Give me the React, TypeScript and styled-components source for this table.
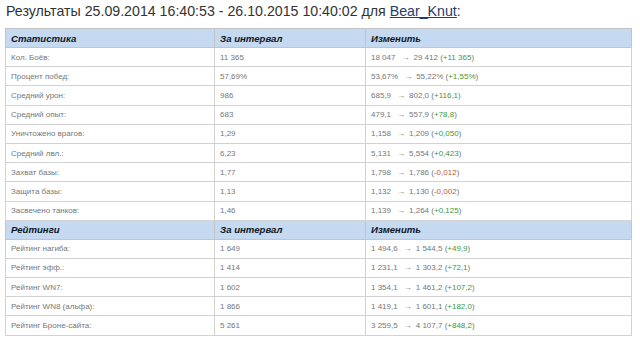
import React from 'react';
import styled, { createGlobalStyle } from 'styled-components';

////////////////////// styled [START]
const GlobalStyle = createGlobalStyle`
  html, body {
    margin: 0;
    padding: 0;
    background: #fff;
  }
`;

const Page = styled.div`
  padding: 2px 5px 0 5px;
  width: 626px;
  font-family: 'Liberation Sans', Arial, sans-serif;
`;

const Title = styled.h2`
  margin: 0 0 8px 1px;
  height: 18px;
  font-size: 14.2px;
  font-weight: normal;
  line-height: 18px;
  color: #333;
  white-space: nowrap;
`;

const UserLink = styled.a`
  color: #1e3c6e;
  text-decoration: underline;
`;

const Table = styled.table`
  width: 626px;
  border-collapse: collapse;
  table-layout: fixed;
  border: 1px solid #c4c4c4;
`;

const HeadCell = styled.th`
  height: 18px;
  padding: 0 5px;
  background: #c5daf0;
  border: 1px solid #c4c4c4;
  text-align: left;
  font-size: 9.6px;
  font-weight: bold;
  font-style: italic;
  color: #0e1626;
`;

const Cell = styled.td`
  height: 18.2px;
  padding: 0 5px;
  border: 1px solid #d2d2d2;
  font-size: 8px;
  color: #777;
  white-space: nowrap;
`;

type DeltaProps = { $negative: boolean };
const Delta = styled.span<DeltaProps>`
  color: ${({ $negative }) => ($negative ? '#c8582e' : '#3c9a3c')};
`;

const Arrow = styled.span`
  margin: 0 4px 0 6px;
  font-size: 8px;
  color: #777;
`;
////////////////////// styled [END]

type Row = [string, string, string, string, string];

const stats: Row[] = [
  ['Кол. Боёв:', '11 365', '18 047', '29 412', '+11 365'],
  ['Процент побед:', '57,69%', '53,67%', '55,22%', '+1,55%'],
  ['Средний урон:', '986', '685,9', '802,0', '+116,1'],
  ['Средний опыт:', '683', '479,1', '557,9', '+78,8'],
  ['Уничтожено врагов:', '1,29', '1,158', '1,209', '+0,050'],
  ['Средний лвл.:', '6,23', '5,131', '5,554', '+0,423'],
  ['Захват базы:', '1,77', '1,798', '1,786', '-0,012'],
  ['Защита базы:', '1,13', '1,132', '1,130', '-0,002'],
  ['Засвечено танков:', '1,46', '1,139', '1,264', '+0,125'],
];

const ratings: Row[] = [
  ['Рейтинг нагиба:', '1 649', '1 494,6', '1 544,5', '+49,9'],
  ['Рейтинг эфф.:', '1 414', '1 231,1', '1 303,2', '+72,1'],
  ['Рейтинг WN7:', '1 602', '1 354,1', '1 461,2', '+107,2'],
  ['Рейтинг WN8 (альфа):', '1 866', '1 419,1', '1 601,1', '+182,0'],
  ['Рейтинг Броне-сайта:', '5 261', '3 259,5', '4 107,7', '+848,2'],
];

const Section: React.FC<{ title: string; rows: Row[] }> = ({ title, rows }) => (
  <>
    <tr>
      <HeadCell>{title}</HeadCell>
      <HeadCell>За интервал</HeadCell>
      <HeadCell>Изменить</HeadCell>
    </tr>
    {rows.map(([label, value, from, to, delta]) => (
      <tr key={label}>
        <Cell>{label}</Cell>
        <Cell>{value}</Cell>
        <Cell>
          {from}
          <Arrow>→</Arrow>
          {to} (<Delta $negative={delta.startsWith('-')}>{delta}</Delta>)
        </Cell>
      </tr>
    ))}
  </>
);

const App: React.FC = () => {
  return (
    <Page>
      <GlobalStyle />
      <Title>
        Результаты 25.09.2014 16:40:53 - 26.10.2015 10:40:02 для{' '}
        <UserLink href="#">Bear_Knut</UserLink>:
      </Title>
      <Table>
        <colgroup>
          <col style={{ width: 209 }} />
          <col style={{ width: 151 }} />
          <col style={{ width: 266 }} />
        </colgroup>
        <tbody>
          <Section title="Статистика" rows={stats} />
          <Section title="Рейтинги" rows={ratings} />
        </tbody>
      </Table>
    </Page>
  );
};

export default App;
